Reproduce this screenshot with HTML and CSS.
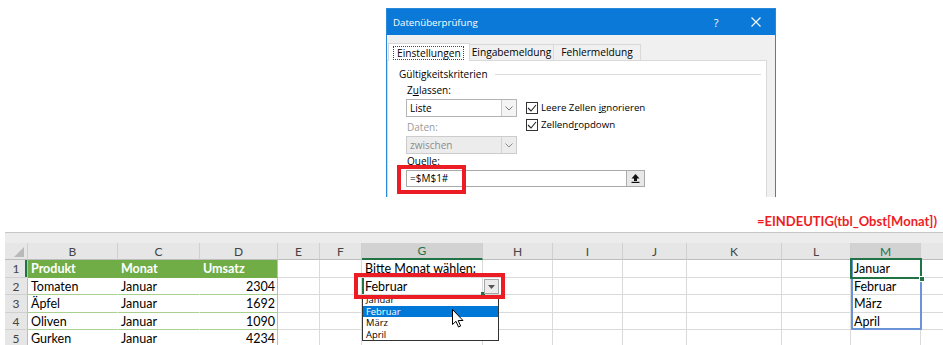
FILE: index.html
```html
<!DOCTYPE html>
<html lang="de">
<head>
  <meta charset="UTF-8" />
  <meta name="viewport" content="width=device-width, initial-scale=1.0"/>
  <title>Datenüberprüfung</title>
  <link rel="stylesheet" href="styles.css">
</head>
<body>
  <div class="dialog">
    <div class="titlebar">
      <span class="title">Datenüberprüfung</span>
      <span class="tb-btn help">?</span>
      <span class="tb-btn close">
        <svg width="10" height="10" viewBox="0 0 10 10"><path d="M0.5 0.5 L9.5 9.5 M9.5 0.5 L0.5 9.5" stroke="#fff" stroke-width="1.1" fill="none"/></svg>
      </span>
    </div>
    <div class="tabs">
      <span class="tab active"><span class="focus">Einstellungen</span></span>
      <span class="tab tab-2">Eingabemeldung</span>
      <span class="tab tab-3">Fehlermeldung</span>
    </div>
    <div class="panel">
      <div class="group">Gültigkeitskriterien</div>
      <div class="fields">
        <div class="field-col">
          <div class="label">Z<u>u</u>lassen:</div>
          <div class="select">
            <span class="select-text">Liste</span>
            <span class="select-arrow">
              <svg width="8" height="5" viewBox="0 0 8 5"><path d="M0.5 0.5 L4 4 L7.5 0.5" stroke="#777" fill="none"/></svg>
            </span>
          </div>
          <div class="label label-gap disabled">Daten:</div>
          <div class="select select-disabled">
            <span class="select-text">zwischen</span>
            <span class="select-arrow">
              <svg width="8" height="5" viewBox="0 0 8 5"><path d="M0.5 0.5 L4 4 L7.5 0.5" stroke="#8a8a8a" fill="none"/></svg>
            </span>
          </div>
        </div>
        <div class="checks">
          <div class="check">
            <span class="box"><svg width="10" height="10" viewBox="0 0 10 10"><path d="M1 5 L4 8 L9 2" stroke="#222" stroke-width="1.1" fill="none"/></svg></span>
            <span>Leere Zellen <u>i</u>gnorieren</span>
          </div>
          <div class="check">
            <span class="box"><svg width="10" height="10" viewBox="0 0 10 10"><path d="M1 5 L4 8 L9 2" stroke="#222" stroke-width="1.1" fill="none"/></svg></span>
            <span>Zellend<u>r</u>opdown</span>
          </div>
        </div>
      </div>
      <div class="label source-label"><u>Q</u>uelle:</div>
      <div class="source">
        <span class="source-text">=$M$1#</span>
        <span class="source-btn">
          <svg width="9" height="9" viewBox="0 0 9 9"><path d="M4.5 0 L8.5 4.5 L6 4.5 L6 7 L3 7 L3 4.5 L0.5 4.5 Z" fill="#111"/><rect x="0.5" y="7.8" width="8" height="1.2" fill="#111"/></svg>
        </span>
      </div>
    </div>
    <div class="mark mark-source"></div>
  </div>

  <div class="formula">=EINDEUTIG(tbl_Obst[Monat])</div>

  <div class="sheet">
    <div class="strip"></div>
    <table class="grid">
      <colgroup>
        <col class="w-rh"><col class="w-b"><col class="w-c"><col class="w-d"><col class="w-e"><col class="w-f"><col class="w-g">
        <col class="w-h"><col class="w-i"><col class="w-j"><col class="w-k"><col class="w-l"><col class="w-m"><col class="w-n">
      </colgroup>
      <tr class="head">
        <td class="corner"></td><td>B</td><td>C</td><td>D</td><td>E</td><td>F</td><td class="hl hl-line">G</td>
        <td>H</td><td>I</td><td>J</td><td>K</td><td>L</td><td class="hl">M</td><td></td>
      </tr>
      <tr class="r18">
        <td class="rh rh-active">1</td><td class="th">Produkt</td><td class="th">Monat</td><td class="th th-last">Umsatz</td><td></td><td></td>
        <td class="txt">Bitte Monat wählen:</td><td></td><td></td><td></td><td></td><td></td><td class="txt">Januar</td><td></td>
      </tr>
      <tr class="r17">
        <td class="rh">2</td><td class="tb">Tomaten</td><td class="tb">Januar</td><td class="tb num tb-last">2304</td><td></td><td></td>
        <td class="txt active-cell">Februar</td><td></td><td></td><td></td><td></td><td></td><td class="txt">Februar</td><td></td>
      </tr>
      <tr class="r18">
        <td class="rh">3</td><td class="tb">Äpfel</td><td class="tb">Januar</td><td class="tb num tb-last">1692</td><td></td><td></td>
        <td></td><td></td><td></td><td></td><td></td><td></td><td class="txt">März</td><td></td>
      </tr>
      <tr class="r17">
        <td class="rh">4</td><td class="tb">Oliven</td><td class="tb">Januar</td><td class="tb num tb-last">1090</td><td></td><td></td>
        <td></td><td></td><td></td><td></td><td></td><td></td><td class="txt">April</td><td></td>
      </tr>
      <tr class="r18">
        <td class="rh">5</td><td class="tb">Gurken</td><td class="tb">Januar</td><td class="tb num tb-last">4234</td><td></td><td></td>
        <td></td><td></td><td></td><td></td><td></td><td></td><td></td><td></td>
      </tr>
    </table>

    <!-- overlays: selection, dropdown, highlight -->
    <div class="spill"></div>
    <div class="active-m"><span class="handle"></span></div>
    <div class="g-handle"></div>
    <div class="dd-btn">
      <svg width="7" height="4" viewBox="0 0 7 4"><path d="M0 0 L7 0 L3.5 4 Z" fill="#555"/></svg>
    </div>
    <div class="dd-list">
      <div class="dd-items">
        <div class="dd-item">Januar</div>
        <div class="dd-item selected">Februar</div>
        <div class="dd-item">März</div>
        <div class="dd-item">April</div>
      </div>
    </div>
    <svg class="cursor" width="12" height="19" viewBox="0 0 12 19"><path d="M0.5 0.5 L0.5 15.5 L4 12.3 L6.5 18 L8.6 17 L6.2 11.5 L11 11.5 Z" fill="#fff" stroke="#000" stroke-width="1" stroke-linejoin="round"/></svg>
    <div class="mark mark-cell"></div>
  </div>
</body>
</html>
```

FILE: styles.css
```css
* { box-sizing: border-box; }
body { margin: 0; width: 943px; height: 345px; overflow: hidden; background: #fff; font-family: Lato, "Liberation Sans", sans-serif; color: #000; }

/* red markers */
.mark { position: absolute; border: 4px solid #ec1c24; }

/* dialog */
.dialog { position: relative; margin: 8px 0 0 386px; width: 390px; height: 189px; overflow: hidden; background: #f0f0f0; border: 1px solid #2a88d8; border-bottom: none; font-family: "Open Sans", "Noto Sans", sans-serif; font-size: 10px; }
.titlebar { height: 26px; background: #0a79d8; color: #fff; display: flex; align-items: center; padding-left: 6px; font-size: 9.7px; }
.title { flex: 1; }
.tb-btn { width: 20px; text-align: center; display: flex; justify-content: center; align-items: center; }
.help { margin-right: 20px; font-size: 11px; }
.close { margin-right: 9px; }
.tabs { display: flex; height: 17px; margin: 8px 0 0 1px; align-items: flex-end; font-size: 10.2px; }
.tab { height: 16px; line-height: 15px; border: 1px solid #d9d9d9; border-bottom: none; background: #f0f0f0; text-align: center; margin-left: -1px; }
.tab.active { width: 82px; height: 18px; line-height: 16px; background: #fff; margin-left: 0; position: relative; z-index: 1; margin-bottom: -1px; padding: 1px 0 0 4px; text-align: left; }
.focus { border: 1px dotted #444; padding: 0 2px 0 3px; display: inline-block; line-height: 12px; height: 14px; }
.tab-2 { width: 85px; }
.tab-3 { width: 88px; }
.panel { width: 380px; height: 150px; border: 1px solid #d9d9d9; background: #fff; padding: 6px 5px 0 11px; }
.group { display: flex; align-items: center; height: 14px; }
.group::after { content: ""; flex: 1; border-top: 1px solid #dcdcdc; margin-left: 7px; }
.fields { display: flex; padding-left: 7px; margin-top: 2px; }
.field-col { width: 111px; }
.label { height: 14px; line-height: 14px; padding-left: 1px; }
.label-gap { margin-top: 3px; }
.disabled { color: #9b9b9b; }
.select { display: flex; height: 18px; margin-top: 2px; border: 1px solid #b4b4b4; background: #fff; }
.select-text { flex: 1; padding-left: 3px; line-height: 16px; }
.select-arrow { width: 15px; border-left: 1px solid #c8c8c8; background: #f4f4f4; display: flex; align-items: center; justify-content: center; }
.select-disabled { background: #ececec; border-color: #cccccc; color: #8c8c8c; }
.select-disabled .select-arrow { background: #ececec; border-left-color: #d4d4d4; }
.checks { margin: 16px 0 0 9px; font-size: 9.7px; }
.check { display: flex; align-items: center; height: 17px; }
.box { width: 12px; height: 12px; border: 1px solid #333; display: flex; align-items: center; justify-content: center; margin-right: 3px; background: #fff; }
.source-label { margin-left: 7px; }
.source { display: flex; width: 239px; height: 17px; margin: 2px 0 0 7px; border: 1px solid #a8a8a8; }
.source-text { flex: 1; padding-left: 3px; line-height: 15px; }
.source-btn { width: 18px; background: #e8e8e8; border-left: 1px solid #adadad; display: flex; align-items: center; justify-content: center; }
.mark-source { left: 10px; top: 156px; width: 69px; height: 29px; }

/* formula caption */
.formula { height: 16px; margin: 16px 6px 3px 0; text-align: right; color: #ee1c25; font-weight: bold; font-size: 13px; line-height: 16px; }

/* spreadsheet */
.sheet { position: relative; margin-left: 5px; }
.strip { height: 11px; background: #ececec; border-top: 1px solid #c6c6c6; }
.grid { border-collapse: separate; border-spacing: 0; table-layout: fixed; width: 938px; font-size: 12.5px; }
.w-rh { width: 23px; } .w-b { width: 90px; } .w-c { width: 82px; } .w-d { width: 78px; }
.w-e { width: 42px; } .w-f { width: 42px; } .w-g { width: 121px; } .w-h { width: 70px; }
.w-i { width: 70px; } .w-j { width: 64px; } .w-k { width: 95px; } .w-l { width: 69px; }
.w-m { width: 70px; } .w-n { width: 25px; }
.grid td { padding: 0 3px; border-right: 1px solid #dadada; border-bottom: 1px solid #dadada; white-space: nowrap; overflow: visible; }
.r18 { height: 18px; }
.r17 { height: 17px; }
.head { height: 16px; }
.head td { background: #e6e6e6; color: #444; text-align: center; font-size: 12px; border-right-color: #cfcfcf; border-bottom-color: #bdbdbd; }
.head td.hl { background: #d2d2d2; color: #217346; }
.head td.hl-line { border-bottom: 2px solid #217346; }
.corner { position: relative; }
.corner::after { content: ""; position: absolute; right: 3px; bottom: 2px; border-left: 10px solid transparent; border-bottom: 10px solid #b9b9b9; }
.rh { background: #e6e6e6; color: #444; text-align: center; font-size: 12px; border-right-color: #bdbdbd !important; border-bottom-color: #d0d0d0 !important; padding: 0 !important; }
.rh-active { box-shadow: inset -2px 0 #217346; }
.th { background: #70ad47; color: #fff; font-weight: bold; border-right-color: #70ad47 !important; border-bottom-color: #70ad47 !important; }
.th-last { border-right-color: #a9d08e !important; }
.tb { border-right-color: #fff !important; border-bottom-color: #a9d08e !important; }
.tb-last { border-right-color: #a9d08e !important; }
.num { text-align: right; padding-right: 2px !important; }
.active-cell { box-shadow: inset 2px 0 #217346; }

.spill { position: absolute; left: 846px; top: 26px; width: 71px; height: 72px; border: 2px solid #6a93d8; }
.active-m { position: absolute; left: 845px; top: 26px; width: 72px; height: 21px; border: 2px solid #217346; }
.handle { position: absolute; right: -5px; bottom: -5px; width: 6px; height: 6px; background: #217346; border: 1px solid #fff; }
.g-handle { position: absolute; left: 476px; top: 60px; width: 4px; height: 4px; background: #217346; }
.dd-btn { position: absolute; left: 479px; top: 47px; width: 15px; height: 15px; background: #ececec; border: 1px solid #a6a6a6; display: flex; align-items: center; justify-content: center; }
.dd-list { position: absolute; left: 357px; top: 63px; width: 137px; height: 46px; background: #fff; border: 1px solid #333; overflow: hidden; font-family: "Open Sans", "Noto Sans", sans-serif; font-size: 9.4px; }
.dd-items { margin-top: -2px; }
.dd-item { height: 11.5px; line-height: 11.5px; padding-left: 3px; }
.dd-item.selected { background: #0078d7; color: #fff; }
.cursor { position: absolute; left: 447px; top: 77px; }
.mark-cell { left: 349px; top: 41px; width: 151px; height: 26px; }
```
